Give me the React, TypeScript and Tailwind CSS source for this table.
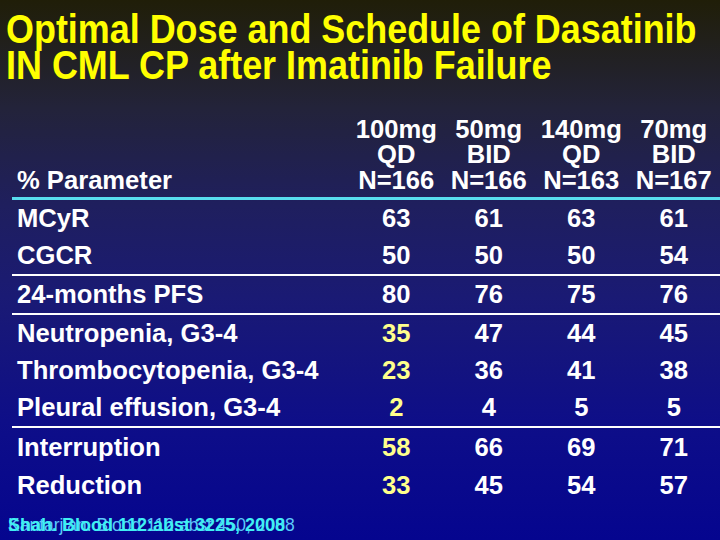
import React from "react";

type Row = { label: string; vals: string[]; yellow?: boolean; border?: boolean; lh: string };

const rows: Row[] = [
  { label: "MCyR", vals: ["63", "61", "63", "61"], lh: "leading-[37px]" },
  { label: "CGCR", vals: ["50", "50", "50", "54"], lh: "leading-[37px]" },
  { label: "24-months PFS", vals: ["80", "76", "75", "76"], border: true, lh: "leading-[37px]" },
  { label: "Neutropenia, G3-4", vals: ["35", "47", "44", "45"], yellow: true, border: true, lh: "leading-[37px]" },
  { label: "Thrombocytopenia, G3-4", vals: ["23", "36", "41", "38"], yellow: true, lh: "leading-[37px]" },
  { label: "Pleural effusion, G3-4", vals: ["2", "4", "5", "5"], yellow: true, lh: "leading-[37px]" },
  { label: "Interruption", vals: ["58", "66", "69", "71"], yellow: true, border: true, lh: "leading-[38px]" },
  { label: "Reduction", vals: ["33", "45", "54", "57"], yellow: true, lh: "leading-[38px]" },
];

const heads = [
  ["100mg", "QD", "N=166"],
  ["50mg", "BID", "N=166"],
  ["140mg", "QD", "N=163"],
  ["70mg", "BID", "N=167"],
];

export default function App() {
  return (
    <div
      className="w-[720px] h-[540px] overflow-hidden bg-[linear-gradient(180deg,#201e08_0%,#23233a_20%,#1f1f5e_38%,#1a1a74_55%,#0e0e88_78%,#05058f_100%)]"
      style={{ fontFamily: '"Liberation Sans", Arial, sans-serif' }}
    >
      <h1 className="pt-[11px] pl-[6px] h-[83px] text-[41px] leading-[36px] font-bold text-[#ffff00] whitespace-nowrap">
        <div className="origin-left scale-x-[0.876]">Optimal Dose and Schedule of Dasatinib</div>
        <div className="origin-left scale-x-[0.876]">IN CML CP after Imatinib Failure</div>
      </h1>

      <div className="ml-[12px] mt-[33.5px] text-white font-bold text-[25.6px]">
        <div className="flex items-end pb-[4px] border-b-[3px] border-[#58dcef] leading-[25.5px]">
          <div className="w-[338px] pl-[5px]">% Parameter</div>
          {heads.map((h, i) => (
            <div key={i} className="w-[92.5px] text-center whitespace-nowrap">
              {h.map((t) => (
                <div key={t}>{t}</div>
              ))}
            </div>
          ))}
        </div>
        {rows.map((r) => (
          <div
            key={r.label}
            className={`flex ${r.lh} ${r.border ? "border-t-2 border-white" : ""}`}
          >
            <div className="w-[338px] pl-[5px] whitespace-nowrap">{r.label}</div>
            {r.vals.map((v, i) => (
              <div
                key={i}
                className={`w-[92.5px] text-center ${i === 0 && r.yellow ? "text-[#ffff8c]" : "text-white"}`}
              >
                {v}
              </div>
            ))}
          </div>
        ))}
      </div>

      <div className="relative mt-[11px] ml-[8px] h-[20px] text-[18px] leading-[20px] whitespace-nowrap">
        <div className="absolute left-0 top-0 text-[17.5px] text-[#5cc8fa] font-normal">
          Kantarjian. Blood 112:abst 450, 2008
        </div>
        <div className="absolute left-0 top-0 font-bold text-[#3ff0f2]">
          Shah. Blood 112:abst 3225, 2008
        </div>
      </div>
    </div>
  );
}
